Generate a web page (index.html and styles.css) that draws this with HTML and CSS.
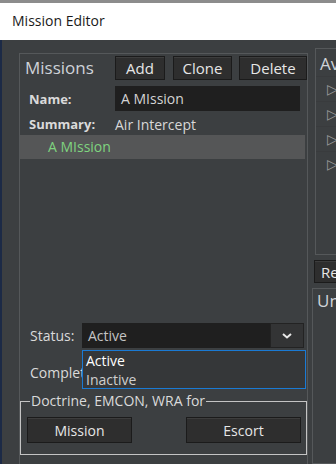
FILE: index.html
```html
<!DOCTYPE html>
<html lang="en">

<head>
    <meta charset="UTF-8">
    <meta name="viewport" content="width=device-width, initial-scale=1.0">
    <title>Mission Editor</title>
    <link rel="stylesheet" href="styles.css">
</head>

<body>
    <div class="titlebar">Mission Editor</div>

    <div class="main">
        <div class="missions">
            <div class="missions-head">
                <span class="missions-title">Missions</span>
                <button class="btn btn-add">Add</button>
                <button class="btn btn-clone">Clone</button>
                <button class="btn btn-delete">Delete</button>
            </div>

            <div class="field-row">
                <span class="field-label">Name:</span>
                <div class="text-input">A MIssion</div>
            </div>
            <div class="field-row summary-row">
                <span class="field-label">Summary:</span>
                <span class="field-value">Air Intercept</span>
            </div>

            <div class="mission-list">
                <div class="mission-item selected">A MIssion</div>
            </div>

            <div class="status-row">
                <span class="status-label">Status:</span>
                <div class="combo">
                    <span class="combo-value">Active</span>
                    <span class="combo-arrow">
                        <svg width="12" height="8" viewBox="0 0 12 8">
                            <path d="M2 2 L6 5.5 L10 2" fill="none" stroke="#e8e8e8" stroke-width="2" />
                        </svg>
                    </span>
                </div>
                <!-- opened list lies over the rows below -->
                <div class="combo-list">
                    <div class="combo-option current">Active</div>
                    <div class="combo-option">Inactive</div>
                </div>
            </div>
            <div class="complete-row">Completion</div>

            <fieldset class="doctrine">
                <legend>Doctrine, EMCON, WRA for</legend>
                <div class="doctrine-buttons">
                    <button class="btn btn-mission">Mission</button>
                    <button class="btn btn-escort">Escort</button>
                </div>
            </fieldset>
        </div>

        <div class="side">
            <div class="assigned">
                <div class="side-title">Av</div>
                <div class="tree-row"><span class="tri">▷</span></div>
                <div class="tree-row"><span class="tri">▷</span></div>
                <div class="tree-row"><span class="tri">▷</span></div>
                <div class="tree-row"><span class="tri">▷</span></div>
            </div>
            <button class="btn btn-side">Re</button>
            <div class="unassigned">
                <div class="side-title">Un</div>
            </div>
        </div>
    </div>
</body>

</html>
```

FILE: styles.css
```css
:root {
    --bg: #3c3f41;
    --panel-line: #55585a;
    --text: #d6d6d6;
    --btn-bg: #2e2e2e;
    --field-bg: #1f1f1f;
}

body {
    margin: 0;
    width: 336px;
    height: 464px;
    overflow: hidden;
    background: var(--bg);
    font-family: 'Open Sans', 'Noto Sans', sans-serif;
    color: var(--text);
}

.titlebar {
    height: 37px;
    border-top: 3px solid #8c8c8c;
    background: #ffffff;
    color: #1a1a1a;
    font-size: 14px;
    line-height: 36px;
    padding-left: 12px;
}

.main {
    display: flex;
    height: 424px;
    border-left: 2px solid #1c2a46;
    padding-left: 17px;
}

.missions {
    flex: none;
    width: 287px;
    margin-top: 13px;
    border: 1px solid var(--panel-line);
    border-bottom: none;
    display: flex;
    flex-direction: column;
}

.btn {
    font-family: inherit;
    background: var(--btn-bg);
    color: #e6e6e6;
    border: 1px solid #1b1b1b;
    box-shadow: inset 0 1px 0 #3d3d3d;
    padding: 0;
    cursor: pointer;
}

.missions-head {
    display: flex;
    align-items: center;
    height: 24px;
    margin-top: 2px;
    padding-left: 5px;
}

.missions-title {
    width: 90px;
    font-size: 17px;
    color: #cfd3d8;
    margin-top: -2px;
}

.missions-head .btn {
    height: 24px;
    font-size: 15px;
}

.btn-add {
    width: 50px;
}

.btn-clone {
    width: 59px;
    margin-left: 8px;
}

.btn-delete {
    width: 68px;
    margin-left: 7px;
}

.field-row {
    display: flex;
    align-items: center;
    padding-left: 9px;
    margin-top: 6px;
    height: 25px;
}

.field-label {
    width: 86px;
    font-size: 13px;
    font-weight: bold;
    color: #dadada;
}

.text-input {
    width: 179px;
    height: 25px;
    line-height: 25px;
    padding-left: 6px;
    background: var(--field-bg);
    font-size: 14px;
    color: #d4d4d4;
}

.summary-row {
    margin-top: 3px;
    height: 20px;
}

.field-value {
    font-size: 14px;
    color: #d8d8d8;
}

.mission-list {
    margin-top: 1px;
    height: 188px;
}

.mission-item {
    height: 24px;
    line-height: 24px;
    padding-left: 28px;
    font-size: 14px;
}

.mission-item.selected {
    background: #555657;
    margin-right: 2px;
    color: #7fd47f;
}

.status-row {
    position: relative;
    display: flex;
    align-items: center;
    height: 25px;
    padding-left: 10px;
}

.status-label {
    width: 52px;
    font-size: 14px;
    color: #dadada;
}

.combo {
    display: flex;
    width: 222px;
    height: 25px;
    background: var(--field-bg);
}

.combo-value {
    flex: 1;
    padding-left: 6px;
    line-height: 25px;
    font-size: 14px;
    color: #c4c4c4;
}

.combo-arrow {
    width: 34px;
    display: flex;
    align-items: center;
    justify-content: center;
    background: #333435;
    border: 1px solid #232323;
    box-sizing: border-box;
}

.combo-list {
    position: absolute;
    left: 62px;
    top: 27px;
    width: 222px;
    height: 37px;
    background: #353739;
    border: 1px solid #1a7ad4;
    z-index: 2;
}

.combo-option {
    height: 19px;
    line-height: 19px;
    padding-left: 3px;
    font-size: 14px;
    color: #cfcfcf;
}

.combo-option.current {
    color: #ffffff;
}

.complete-row {
    margin-top: 15px;
    padding-left: 10px;
    height: 20px;
    line-height: 20px;
    font-size: 14px;
    color: #dadada;
}

.doctrine {
    margin: 10px 0 0 0;
    width: 287px;
    height: 62px;
    box-sizing: border-box;
    border: 1px solid #c4c4c4;
    padding: 0 5px 0 6px;
}

.doctrine legend {
    padding: 0 1px;
    margin-left: 3px;
    font-size: 14px;
    line-height: 16px;
    color: #dadada;
}

.doctrine-buttons {
    display: flex;
    justify-content: space-between;
    margin-top: 8px;
}

.doctrine-buttons .btn {
    height: 26px;
    font-size: 14px;
}

.btn-mission {
    width: 105px;
}

.btn-escort {
    width: 115px;
}

.side {
    flex: 1;
    display: flex;
    flex-direction: column;
    margin-left: 6px;
}

.assigned {
    margin-top: 8px;
    margin-left: 1px;
    height: 205px;
    border: 1px solid var(--panel-line);
    border-right: none;
}

.side-title {
    font-size: 17px;
    color: #cfd3d8;
    padding-left: 4px;
    line-height: 24px;
    white-space: nowrap;
}

.assigned .side-title {
    padding-top: 3px;
}

.tree-row {
    height: 24px;
    padding-left: 11px;
    font-size: 14px;
    line-height: 24px;
    color: #9a9a9a;
    border-top: 1px solid #393b3d;
}

.btn-side {
    margin-top: 5px;
    height: 23px;
    text-align: left;
    padding-left: 6px;
    font-size: 15px;
    border-right: none;
}

.unassigned {
    margin-top: 5px;
    margin-left: -2px;
    flex: 1;
    border: 1px solid var(--panel-line);
    border-right: none;
}
```
